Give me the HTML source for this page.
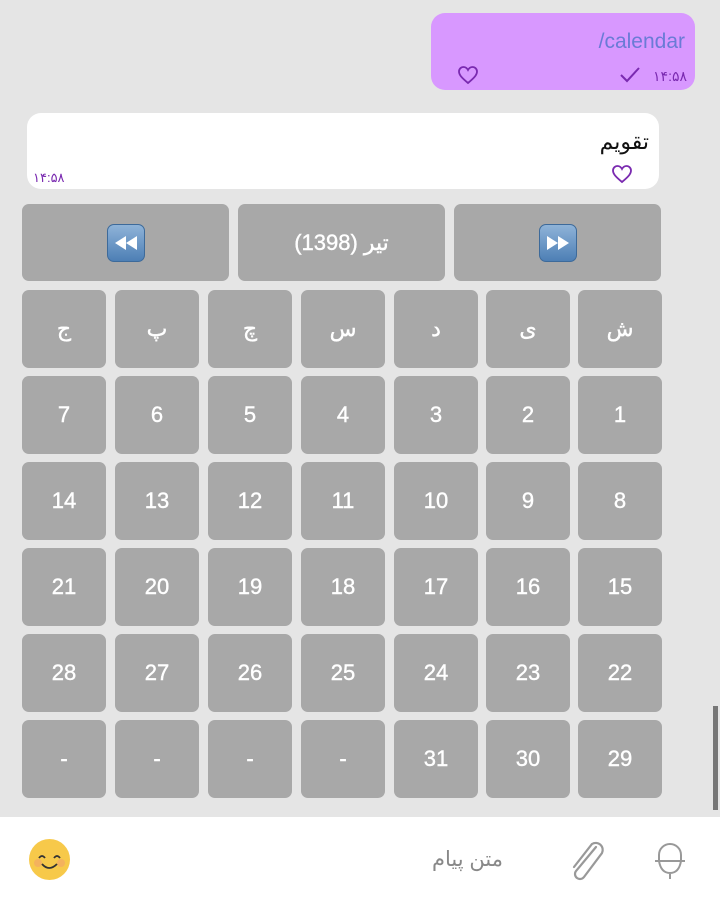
<!DOCTYPE html>
<html><head><meta charset="utf-8"><style>
*{margin:0;padding:0;box-sizing:border-box}
body{width:720px;height:899px;background:#e5e5e5;position:relative;overflow:hidden;font-family:"Liberation Sans","Noto Sans CJK SC",sans-serif}
.k{position:absolute;background:#a8a8a8;border-radius:7px;color:#fff;font-size:22px;display:flex;align-items:center;justify-content:center;-webkit-text-stroke:0.4px #fff}
.b{position:absolute;border-radius:14px}
.ff{width:38px;height:38px;border-radius:7px;background:linear-gradient(#8fb3d8,#4d7fb5);border:1px solid #3d6a9a;display:flex;align-items:center;justify-content:center}
</style></head><body>
<div class="b" style="left:431px;top:13px;width:264px;height:77px;background:#d898ff">
<div style="position:absolute;right:10px;top:17px;font-size:21px;color:#6a7bd6">/calendar</div>
<svg style="position:absolute;left:26px;top:52px" width="22" height="20" viewBox="0 0 22 20"><path d="M11 18C5 13 2 10 2 6.5 2 4 4 2 6.5 2 8.5 2 10 3.2 11 5 12 3.2 13.5 2 15.5 2 18 2 20 4 20 6.5 20 10 17 13 11 18Z" fill="none" stroke="#7a2ab0" stroke-width="1.8"/></svg>
<svg style="position:absolute;left:188px;top:53px" width="22" height="18"><path d="M2 9l6 6L20 2" fill="none" stroke="#7a2ab0" stroke-width="2"/></svg>
<div style="position:absolute;right:8px;top:55px;font-size:14px;color:#7a2ab0">۱۴:۵۸</div>
</div>
<div class="b" style="left:27px;top:113px;width:632px;height:76px;background:#fff">
<div style="position:absolute;right:10px;top:16px;font-size:22px;color:#111">تقویم</div>
<svg style="position:absolute;left:584px;top:51px" width="22" height="20" viewBox="0 0 22 20"><path d="M11 18C5 13 2 10 2 6.5 2 4 4 2 6.5 2 8.5 2 10 3.2 11 5 12 3.2 13.5 2 15.5 2 18 2 20 4 20 6.5 20 10 17 13 11 18Z" fill="none" stroke="#7a2ab0" stroke-width="1.8"/></svg>
<div style="position:absolute;left:6px;top:57px;font-size:13px;color:#7a2ab0">۱۴:۵۸</div>
</div>
<div class="k" style="left:22px;top:204px;width:207px;height:77px"><div class="ff"><svg width="26" height="18"><path d="M13 2L2 9l11 7zM24 2L13 9l11 7z" fill="#fff"/></svg></div></div>
<div class="k" style="left:238px;top:204px;width:207px;height:77px">تیر (1398)</div>
<div class="k" style="left:454px;top:204px;width:207px;height:77px"><div class="ff"><svg width="26" height="18"><path d="M2 2l11 7-11 7zM13 2l11 7-11 7z" fill="#fff"/></svg></div></div>
<div id="g"></div>
<script>
var xs=[22,115,208,301,394,486,578],ys=[290,376,462,548,634,720];
var rows=[["ج","پ","چ","س","د","ی","ش"],["7","6","5","4","3","2","1"],["14","13","12","11","10","9","8"],["21","20","19","18","17","16","15"],["28","27","26","25","24","23","22"],["-","-","-","-","31","30","29"]];
var h="";for(var r=0;r<6;r++)for(var c=0;c<7;c++)h+='<div class="k" style="left:'+xs[c]+'px;top:'+ys[r]+'px;width:84px;height:78px">'+rows[r][c]+'</div>';
document.getElementById("g").innerHTML=h;
</script>
<div style="position:absolute;left:713px;top:706px;width:5px;height:104px;background:#777"></div>
<div style="position:absolute;left:0;top:817px;width:720px;height:82px;background:#fff">
<div style="position:absolute;left:29px;top:22px;width:41px;height:41px;border-radius:50%;background:#f7c94a"><svg width="41" height="41"><circle cx="9" cy="24" r="4" fill="#f2a46a" opacity=".6"/><circle cx="32" cy="24" r="4" fill="#f2a46a" opacity=".6"/><path d="M10 19q3-4 6 0M25 19q3-4 6 0M13 25q7 8 15 0" fill="none" stroke="#333" stroke-width="1.8"/></svg></div>
<div style="position:absolute;left:432px;top:30px;font-size:21px;color:#888">متن پیام</div>
<svg style="position:absolute;left:566px;top:22px" width="42" height="42"><path d="M30 8L10 32a5 5 0 0 0 8 6L36 14a7 7 0 0 0-10-9L8 28" fill="none" stroke="#999" stroke-width="2.2" stroke-linecap="round"/></svg>
<svg style="position:absolute;left:652px;top:18px" width="36" height="48"><path d="M7 20a11 11 0 0 1 22 0v6M7 20v6M3 26h30M7 26q2 12 11 12t11-12M18 38v6" fill="none" stroke="#999" stroke-width="2"/></svg>
</div>
</body></html>
